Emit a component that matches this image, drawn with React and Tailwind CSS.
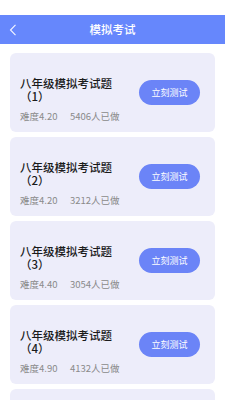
import React from 'react';

const exams = [
  { no: 1, level: '4.20', count: 5406 },
  { no: 2, level: '4.20', count: 3212 },
  { no: 3, level: '4.40', count: 3054 },
  { no: 4, level: '4.90', count: 4132 },
  { no: 5, level: '4.60', count: 2871 },
];

const ExamCard = ({ exam }) => (
  <div className="h-[79px] shrink-0 rounded-[6px] bg-[#ededfa] flex items-center justify-between pl-[10px] pr-[15px]">
    <div className="mt-[14px] flex flex-col">
      <p className="w-[100px] text-[11.5px] font-medium leading-[13px] text-[#1a1a1a]">
        八年级模拟考试题（{exam.no}）
      </p>
      <div className="mt-[7px] flex text-[9.5px] leading-[12px] text-[#8a8a8a]">
        <span className="w-[50px]">难度{exam.level}</span>
        <span>{exam.count}人已做</span>
      </div>
    </div>
    <button className="h-[25px] w-[61px] rounded-full bg-[#6b84f7] text-[9px] text-white">
      立刻测试
    </button>
  </div>
);

const App = () => {
  return (
    <div className="h-[400px] w-[225px] overflow-hidden bg-white" style={{ fontFamily: '"Noto Sans CJK SC", "Noto Sans", sans-serif' }}>
      <div className="h-[15px] bg-white" />
      <div className="relative flex h-[29px] items-center justify-center bg-[#6687fc]">
        <svg className="absolute left-[9px] top-[9px]" width="8" height="12" viewBox="0 0 8 12" fill="none">
          <polyline points="6.5,0.8 1.5,6 6.5,11.2" stroke="#f4f6ff" strokeWidth="1.1" />
        </svg>
        <span className="text-[11.5px] font-medium text-white">模拟考试</span>
      </div>
      <div className="flex flex-col gap-[5px] px-[10px] pt-[9px]">
        {exams.map((exam) => (
          <ExamCard key={exam.no} exam={exam} />
        ))}
      </div>
    </div>
  );
};

export default App;
